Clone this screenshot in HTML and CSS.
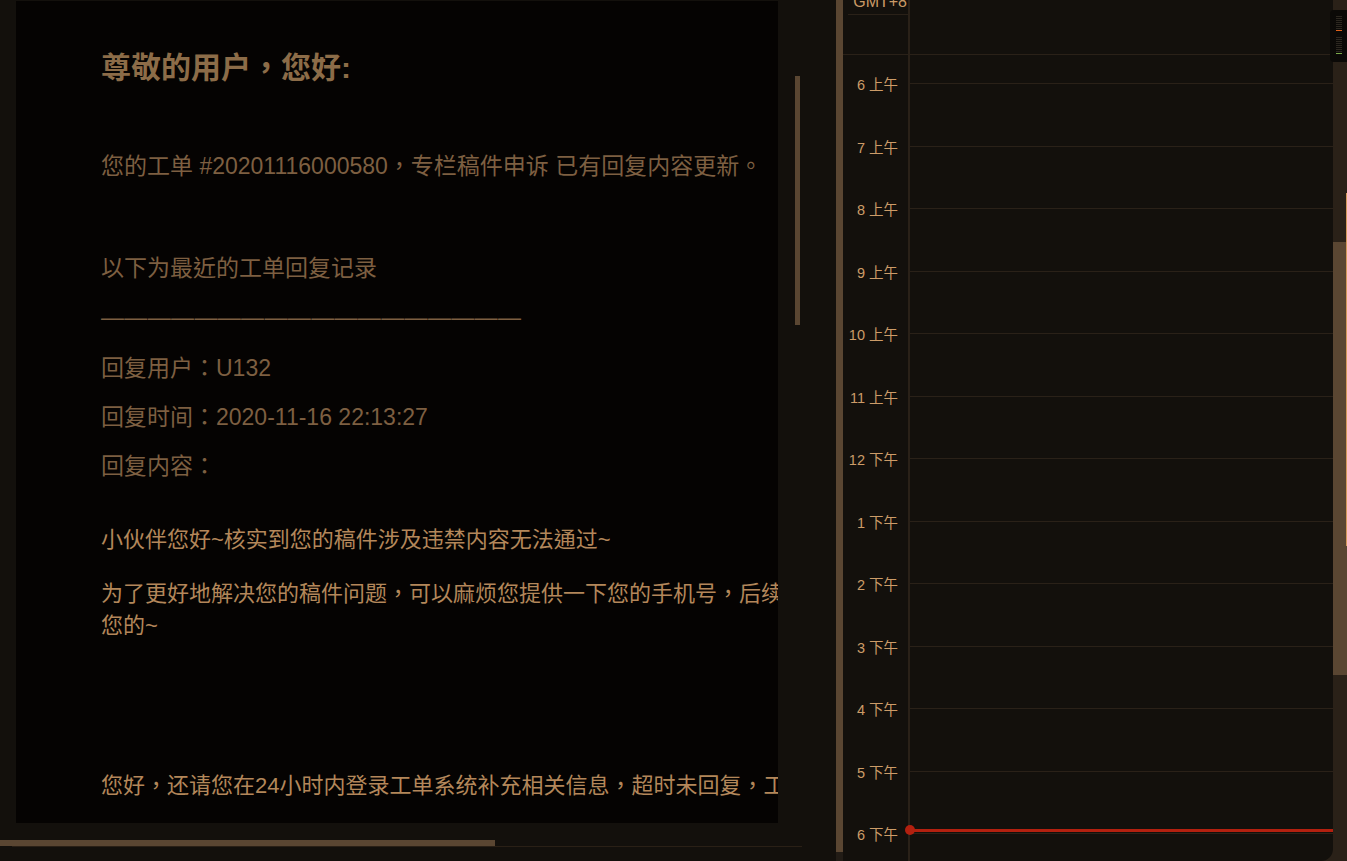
FILE: index.html
```html
<!DOCTYPE html>
<html lang="zh-TW">
<head>
<meta charset="utf-8">
<title>工单回复</title>
<link rel="stylesheet" href="styles.css">
</head>
<body>
<div class="app">
  <section class="mail-pane">
    <div class="mail-row">
      <div class="mail-box">
        <div class="mail-content">
          <h1 class="greet">尊敬的用户，您好:</h1>
          <p class="txt p-order">您的工单 #20201116000580，专栏稿件申诉 已有回复内容更新。</p>
          <p class="txt p-recent">以下为最近的工单回复记录</p>
          <p class="txt p-rule">——————————————————</p>
          <p class="txt p-user">回复用户：U132</p>
          <p class="txt p-meta">回复时间：2020-11-16 22:13:27</p>
          <p class="txt p-meta">回复内容：</p>
          <p class="reply p-hi">小伙伴您好~核实到您的稿件涉及违禁内容无法通过~</p>
          <p class="reply p-phone">为了更好地解决您的稿件问题，可以麻烦您提供一下您的手机号，后续会有专人联系<br>您的~</p>
          <p class="reply p-last">您好，还请您在24小时内登录工单系统补充相关信息，超时未回复，工单将自动关闭哦~</p>
        </div>
      </div>
      <div class="vscroll"></div>
    </div>
    <div class="hscroll"></div>
    <div class="hline"></div>
  </section>

  <div class="divider">
    <div class="divider-bar"></div>
    <div class="divider-foot"></div>
  </div>

  <section class="calendar">
    <div class="timecol">
      <div class="tz"><span>GMT+8</span></div>
      <div class="tz-space"></div>
      <div class="hours">
        <div class="hour">6 上午</div>
        <div class="hour">7 上午</div>
        <div class="hour">8 上午</div>
        <div class="hour">9 上午</div>
        <div class="hour">10 上午</div>
        <div class="hour">11 上午</div>
        <div class="hour">12 下午</div>
        <div class="hour">1 下午</div>
        <div class="hour">2 下午</div>
        <div class="hour">3 下午</div>
        <div class="hour">4 下午</div>
        <div class="hour">5 下午</div>
        <div class="hour">6 下午</div>
      </div>
    </div>
    <div class="grid">
      <div class="grid-head"></div>
      <div class="grid-body">
        <div class="row"></div><div class="row"></div><div class="row"></div>
        <div class="row"></div><div class="row"></div><div class="row"></div>
        <div class="row"></div><div class="row"></div><div class="row"></div>
        <div class="row"></div><div class="row"></div><div class="row"></div>
        <div class="row"></div>
      </div>
    </div>
    <div class="vbar">
      <div class="vbar-thumb"></div>
      <div class="vbar-edge"></div>
    </div>
    <div class="now-line"></div>
    <div class="now-dot"></div>
    <div class="minimap">
      <div class="tick"></div><div class="tick"></div><div class="tick"></div>
      <div class="tick"></div><div class="tick"></div><div class="tick"></div>
      <div class="tick"></div><div class="tick tick-hot"></div>
      <div class="tick-gap"></div>
      <div class="tick"></div><div class="tick"></div><div class="tick"></div>
      <div class="tick"></div><div class="tick"></div><div class="tick"></div>
      <div class="tick"></div><div class="tick"></div><div class="tick tick-ok"></div>
    </div>
  </section>
</div>
</body>
</html>
```

FILE: styles.css
```css
html, body {
  margin: 0;
  padding: 0;
}
body {
  background: #13100c;
  font-family: "Liberation Sans", "Noto Sans CJK TC", sans-serif;
  overflow: hidden;
}
.app {
  display: flex;
  width: 1347px;
  height: 861px;
  overflow: hidden;
}

/* ---------- mail pane ---------- */
.mail-pane {
  width: 836px;
  flex: none;
  display: flex;
  flex-direction: column;
}
.mail-row {
  display: flex;
  height: 823px;
  padding: 1px 0 0 16px;
  box-sizing: border-box;
}
.mail-box {
  width: 762px;
  height: 822px;
  flex: none;
  background: #050302;
  overflow: hidden;
}
.mail-content {
  padding-left: 85px;
  width: 1100px;
  white-space: nowrap;
}
.greet {
  margin: 47px 0 0;
  font-size: 30px;
  line-height: 40px;
  font-weight: bold;
  color: #8c6c48;
}
.txt {
  margin: 0;
  font-size: 23px;
  line-height: 32px;
  color: #7d5f41;
}
.p-order { margin-top: 62px; }
.p-recent { margin-top: 70px; }
.p-rule { margin-top: 17px; letter-spacing: 0.35px; }
.p-user { margin-top: 19px; }
.p-meta { margin-top: 17px; }
.reply {
  margin: 0;
  font-size: 22px;
  line-height: 32px;
  color: #b3875a;
}
.p-hi { margin-top: 42px; }
.p-phone { margin-top: 22px; }
.p-last { margin-top: 128px; }

.vscroll {
  flex: none;
  margin: 75px 0 0 17px;
  width: 5px;
  height: 249px;
  background: #5a4632;
}
.hscroll {
  margin-top: 17px;
  width: 495px;
  height: 6px;
  background: #5a4632;
}
.hline {
  margin-left: 12px;
  width: 790px;
  height: 1px;
  background: #2a2016;
}

/* ---------- divider ---------- */
.divider {
  width: 7px;
  flex: none;
  display: flex;
  flex-direction: column;
}
.divider-bar {
  height: 852px;
  background: #5a4632;
}
.divider-foot {
  flex: 1;
  background: #221c16;
}

/* ---------- calendar ---------- */
.calendar {
  flex: 1;
  display: flex;
  position: relative;
  background: #2a2118;
}
.timecol {
  width: 65px;
  flex: none;
  background: #13100c;
  border-right: 2px solid #2a2118;
  overflow: hidden;
}
.tz {
  margin-left: 5px;
  height: 14px;
  border-bottom: 1px solid #2a2118;
  overflow: hidden;
}
.tz span {
  display: block;
  margin-top: -7px;
  padding-right: 1px;
  font-size: 16px;
  line-height: 18px;
  text-align: right;
  color: #c99a66;
}
.tz-space {
  height: 39px;
  border-bottom: 1px solid #2a2118;
}
.hours {
  padding-top: 20px;
}
.hour {
  height: 62.5px;
  line-height: 20px;
  font-size: 14.5px;
  text-align: right;
  padding-right: 10px;
  color: #cc9c68;
}
.grid {
  flex: 1;
  background: #13100c;
  border-bottom-right-radius: 12px;
  overflow: hidden;
}
.grid-head {
  height: 54px;
  border-bottom: 1px solid #2a2118;
}
.grid-body {
  padding-top: 28px;
}
.row {
  height: 62.5px;
  box-sizing: border-box;
  border-top: 1px solid #2a2118;
}
.vbar {
  width: 14px;
  flex: none;
  background: #2a2118;
  position: relative;
}
.vbar-thumb {
  margin-top: 242px;
  height: 433px;
  background: #5a4632;
}
.vbar-edge {
  position: absolute;
  right: 0;
  top: 193px;
  width: 1px;
  height: 353px;
  background: #d49a5c;
}
.now-line {
  position: absolute;
  left: 67px;
  right: 14px;
  top: 829px;
  height: 3px;
  background: #b3200f;
}
.now-dot {
  position: absolute;
  left: 62px;
  top: 825px;
  width: 10px;
  height: 10px;
  border-radius: 50%;
  background: #b3200f;
}
.minimap {
  position: absolute;
  right: 0;
  top: 10px;
  width: 17px;
  height: 52px;
  box-sizing: border-box;
  padding: 6px 0 0 6px;
  background: #0b0907;
  border-radius: 4px 0 0 4px;
  display: flex;
  flex-direction: column;
  gap: 1px;
}
.tick {
  width: 6px;
  height: 1px;
  background: #2c2720;
}
.tick-hot {
  background: #e0601a;
}
.tick-ok {
  background: #7aa84a;
}
.tick-gap {
  height: 4px;
}
```
